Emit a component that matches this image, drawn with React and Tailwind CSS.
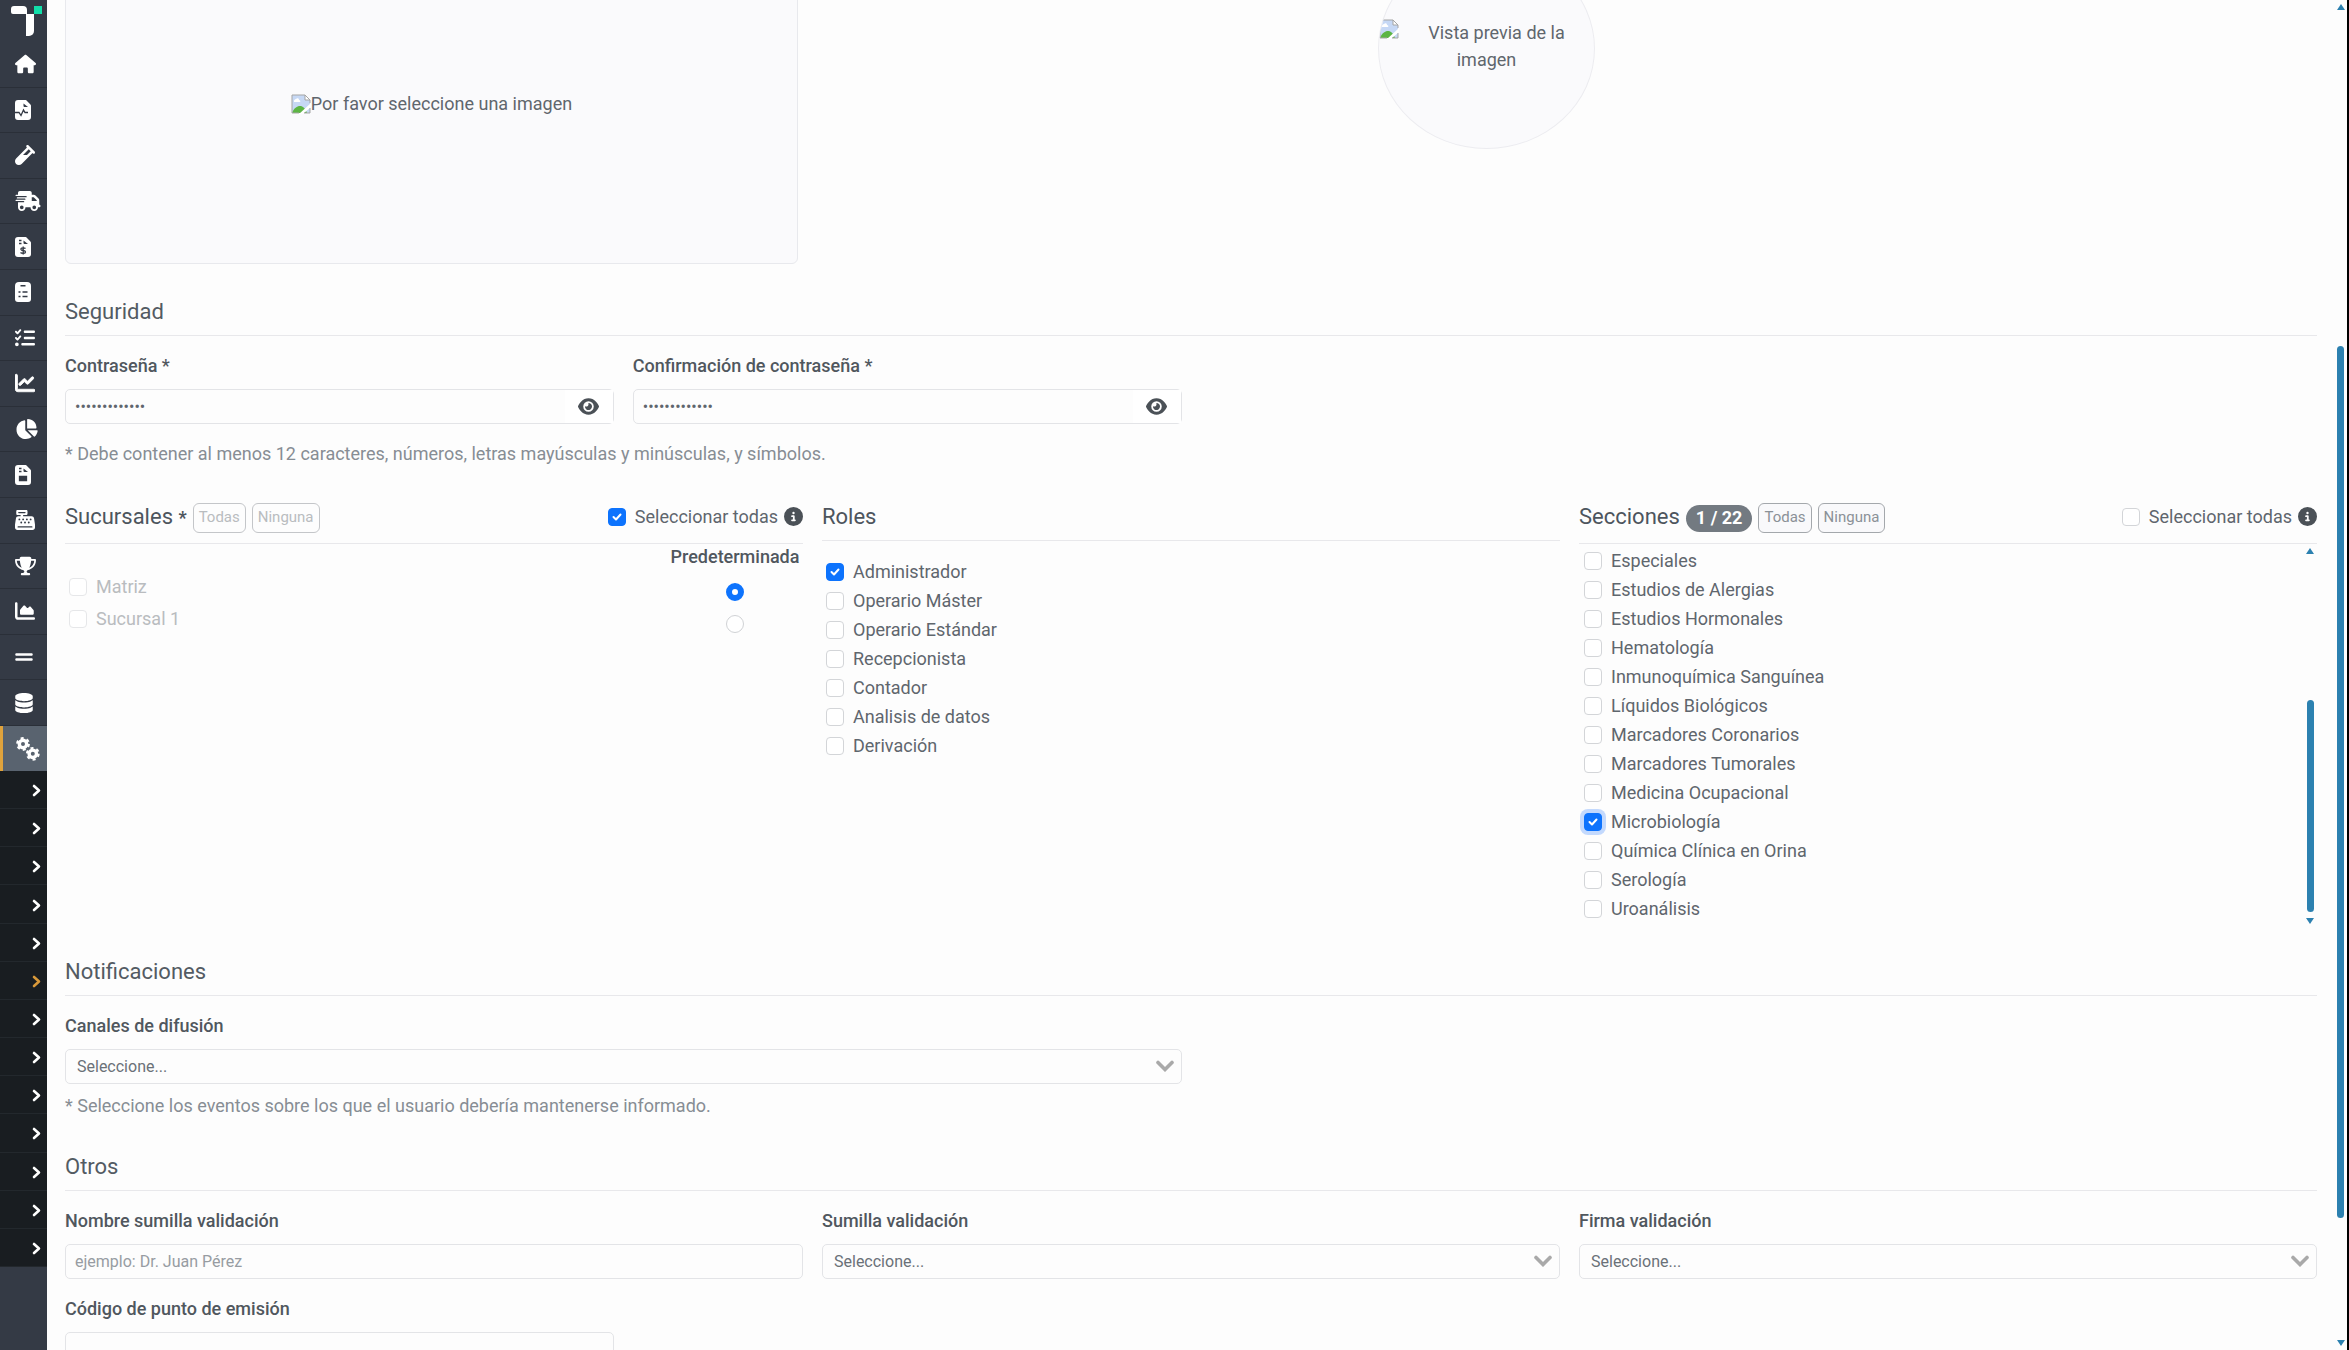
import React, { useState } from 'react';
import {
    FaHouse, FaVial, FaTruckFast, FaListCheck, FaChartLine, FaChartPie, FaCashRegister,
    FaTrophy, FaChartArea, FaGripLines, FaDatabase, FaCircleInfo, FaEye,
} from 'react-icons/fa6';

function FileShape({ children }) {
    return (
        <svg viewBox="0 0 16 20" className="h-5 w-4">
            <path d="M3 0h7c1 0 1.500 0 2 1l3 3c1 1 1 1.500 1 2v11a3 3 0 01-3 3H3a3 3 0 01-3-3V3a3 3 0 013-3z" fill="#fff" />
            <path d="M8.500 3.500L13 7H9.500a1 1 0 01-1-1z" fill="#343a45" />
            <g stroke="#343a45" strokeWidth="1.300" fill="none">{children}</g>
        </svg>
    );
}

const FileWave = () => (
    <FileShape><path d="M0 12.500h4l2 3 2.500-5.500 1.500 2.500h3" /></FileShape>
);

const FileDollar = () => (
    <FileShape><path d="M4 3.500h2.500M4 6.500h2.500M10.500 11.500c-1-1-5-1-4.500 1 .5 1.500 4.500.5 4.500 2.500 0 1.800-4 1.500-5 .5M8.200 9.500v8" /></FileShape>
);

const FileInvoice = () => (
    <FileShape>
        <path d="M4 3.500h2.500M4 6.500h2.500" />
        <path d="M4.500 11.500h7v4h-7z" fill="#343a45" />
    </FileShape>
);

const Clipboard = () => (
    <svg viewBox="0 0 16 20" className="h-5 w-4">
        <path d="M4 0h8a4 4 0 014 4v13a3 3 0 01-3 3H3a3 3 0 01-3-3V4a4 4 0 014-4z" fill="#fff" />
        <path d="M5.500 3.700h5M3.500 10h2M7.500 10h5M3.500 14.500h2M7.500 14.500h5" stroke="#343a45" strokeWidth="1.400" />
    </svg>
);

const Gears = () => (
    <svg viewBox="0 0 24 24" className="h-6 w-6" fill="none" stroke="#fff">
        <circle cx="7" cy="7" r="3.700" strokeWidth="3.400" />
        <circle cx="7" cy="7" r="5.800" strokeWidth="2.200" strokeDasharray="3 3.070" />
        <circle cx="16.800" cy="16.800" r="3.700" strokeWidth="3.400" />
        <circle cx="16.800" cy="16.800" r="5.800" strokeWidth="2.200" strokeDasharray="3 3.070" />
    </svg>
);

const menu = [
    { title: 'Inicio', icon: <FaHouse className="h-5 w-[21px]" /> },
    { title: 'Resultados', icon: <FileWave /> },
    { title: 'Muestras', icon: <FaVial className="h-5 w-5" /> },
    { title: 'Envíos', icon: <FaTruckFast className="h-5 w-[26px]" /> },
    { title: 'Facturas', icon: <FileDollar /> },
    { title: 'Órdenes', icon: <Clipboard /> },
    { title: 'Tareas', icon: <FaListCheck className="h-5 w-5" /> },
    { title: 'Estadísticas', icon: <FaChartLine className="h-5 w-5" strokeWidth="20" stroke="currentColor" /> },
    { title: 'Reportes', icon: <FaChartPie className="h-5 w-[23px]" /> },
    { title: 'Proformas', icon: <FileInvoice /> },
    { title: 'Caja', icon: <FaCashRegister className="h-5 w-5" /> },
    { title: 'Metas', icon: <FaTrophy className="h-5 w-[21px]" /> },
    { title: 'Control', icon: <FaChartArea className="h-5 w-5" /> },
    { title: 'Listas', icon: <FaGripLines className="h-5 w-[18px]" /> },
    { title: 'Datos', icon: <FaDatabase className="h-5 w-[18px]" /> },
];

const roles = ['Administrador', 'Operario Máster', 'Operario Estándar', 'Recepcionista', 'Contador', 'Analisis de datos', 'Derivación'];

const secciones = [
    'Especiales', 'Estudios de Alergias', 'Estudios Hormonales', 'Hematología', 'Inmunoquímica Sanguínea',
    'Líquidos Biológicos', 'Marcadores Coronarios', 'Marcadores Tumorales', 'Medicina Ocupacional',
    'Microbiología', 'Química Clínica en Orina', 'Serología', 'Uroanálisis',
];

function Logo() {
    return (
        <svg viewBox="0 0 32 30" className="h-[30px] w-8">
            <path d="M0 3a3 3 0 013-3h9a4 4 0 014 4v4H2a2 2 0 01-2-2z" fill="#fff" />
            <path d="M15 8h8v17a5 5 0 01-5 5h-3z" fill="#fff" />
            <path d="M23 0h8v8h-8z" fill="#12dfa9" />
        </svg>
    );
}

function BrokenImage() {
    return (
        <svg viewBox="0 0 20 20" className="h-5 w-5 shrink-0">
            <path d="M1 1h13l5 5v13H1z" fill="#c6d8f5" />
            <path d="M3 7c0-1 1-2 2-2 1-1 3-1 3 1 1 0 2 1 1 2H3z" fill="#fff" />
            <path d="M1 19c2-5 5-7 8-7s5 2 7 7z" fill="#5cb544" />
            <path d="M8 20L20 9v4l-8 7z" fill="#fff" />
            <path d="M19 9V6l-5-5H1v18h7M13 19h6v-5" fill="none" stroke="#a5a5a5" />
            <path d="M14 1v5h5z" fill="#fff" stroke="#a5a5a5" />
        </svg>
    );
}

function Sidebar() {
    return (
        <aside className="flex w-[47px] shrink-0 flex-col bg-[#343a45]">
            <a href="#inicio" title="Inicio" className="flex h-[42px] shrink-0 items-start pt-[6px] pl-[11px]"><Logo /></a>
            <nav className="flex flex-col">
                <div className="flex h-[684px] flex-col">
                    {menu.map(({ title, icon }) => (
                        <a key={title} href="#menu" title={title} className="flex flex-1 items-center border-b border-[#2a2f38] pl-[15px] text-white">
                            {icon}
                        </a>
                    ))}
                </div>
                <a href="#config" title="Configuración" className="flex h-[45px] items-center border-l-[3px] border-[#e0a33c] bg-[#59636f] pl-[13px] text-white">
                    <Gears />
                </a>
                <div className="flex h-[496px] flex-col bg-[#191d21]">
                    {Array.from({ length: 13 }, (_, i) => (
                        <a
                            key={i}
                            href="#submenu"
                            title={'Opción ' + (i + 1)}
                            className={'flex flex-1 items-center justify-end border-b border-[#23282d] pt-[2px] pr-[6px] ' + (i === 5 ? 'text-[#d9993a]' : 'text-white')}
                        >
                            <svg viewBox="0 0 9 13" className="h-[13px] w-[9px]">
                                <path d="M2 2l5 4.500L2 11" fill="none" stroke="currentColor" strokeWidth="2.600" strokeLinecap="round" strokeLinejoin="round" />
                            </svg>
                        </a>
                    ))}
                </div>
            </nav>
        </aside>
    );
}

function Check({ label, checked = false, focused = false, disabled = false }) {
    const [on, setOn] = useState(checked);

    return (
        <label className={'flex h-[29px] items-center gap-[9px] ' + (disabled ? 'text-[#b9bcbf]' : '')}>
            <span className="grid h-[18px] w-[18px] shrink-0">
                <input
                    type="checkbox"
                    checked={on}
                    disabled={disabled}
                    onChange={e => setOn(e.target.checked)}
                    className={'col-start-1 row-start-1 h-[18px] w-[18px] appearance-none rounded-[4px] border border-[#d3d5d8] bg-white checked:border-[#0d73fd] checked:bg-[#0d73fd] disabled:border-[#e6e7e9] ' + (focused ? 'ring-4 ring-[#c3d9fd]' : '')}
                />
                {on && (
                    <svg viewBox="0 0 18 18" className="pointer-events-none col-start-1 row-start-1 h-[18px] w-[18px]">
                        <path d="M5.500 9l2.500 2.500 4.500-5" fill="none" stroke="#fff" strokeWidth="2" strokeLinecap="round" strokeLinejoin="round" />
                    </svg>
                )}
            </span>
            {label}
        </label>
    );
}

function SelectAll({ checked }) {
    return (
        <div className="flex items-center gap-[6px]">
            <Check label="Seleccionar todas" checked={checked} />
            <FaCircleInfo className="mb-[2px] h-[19px] w-[19px] text-[#4b5157]" />
        </div>
    );
}

function SectionTitle({ children }) {
    return <h2 className="mt-6 flex h-12 items-center border-b border-[#e8e8eb] pt-[2px] text-[22px] text-[#535b63]">{children}</h2>;
}

function Label({ htmlFor, children }) {
    return <label htmlFor={htmlFor} className="mb-[10px] block leading-[27px] font-medium text-[#50575e]">{children}</label>;
}

function Password({ id, label }) {
    const [visible, setVisible] = useState(false);

    return (
        <div>
            <Label htmlFor={id}>{label}</Label>
            <div className="flex h-[35px] items-center rounded-[5px] border border-[#e3e4e7]">
                <input id={id} type={visible ? 'text' : 'password'} defaultValue="Laboratorio1*" className="h-full min-w-0 flex-1 px-[9px] text-base outline-none" />
                <button type="button" title="Mostrar" onClick={() => setVisible(!visible)} className="flex h-full w-12 items-center justify-center bg-white text-[#4b5157]">
                    <FaEye className="h-[19px] w-[21px]" />
                </button>
            </div>
        </div>
    );
}

function Select({ id, label }) {
    return (
        <div>
            <Label htmlFor={id}>{label}</Label>
            <div className="relative">
                <select id={id} className="h-[35px] w-full appearance-none rounded-[5px] border border-[#e3e4e7] px-[11px] text-base text-[#6a7178]">
                    <option>Seleccione...</option>
                </select>
                <svg viewBox="0 0 18 12" className="pointer-events-none absolute top-[11px] right-2 h-3 w-[18px]">
                    <path d="M2 2.500l7 7 7-7" fill="none" stroke="#a9a9a9" strokeWidth="3.600" strokeLinecap="round" />
                </svg>
            </div>
        </div>
    );
}

function SmallButton({ children, disabled }) {
    return (
        <button
            type="button"
            disabled={disabled}
            className="mt-[2px] h-[30px] rounded-[6px] border border-[#a4a8ac] bg-[#f9f9fb] px-[5px] text-[15px] text-[#8b9197] disabled:border-[#c4c6c9] disabled:bg-transparent disabled:text-[#b9bcbf]"
        >
            {children}
        </button>
    );
}

function Arrow({ down }) {
    return (
        <svg viewBox="0 0 8 6" className="h-[6px] w-2 shrink-0">
            <path d={down ? 'M0 0h8L4 6z' : 'M0 6h8L4 0z'} fill="#2c81b0" />
        </svg>
    );
}

export default function App() {
    return (
        <div className="flex h-screen overflow-hidden bg-[#fdfdfd] font-[Roboto,sans-serif] text-lg text-[#5f666d]">
            <Sidebar />

            <main className="min-w-0 flex-1 overflow-hidden pr-[17px] pl-[18px]">
                {/* Imágenes */}
                <div className="-mt-14 grid grid-cols-3 gap-x-[19px]">
                    <div className="mr-[5px] flex h-80 items-center justify-center rounded-[6px] border border-[#e8e9ed] bg-[#fafafc]">
                        <BrokenImage />
                        <span>Por favor seleccione una imagen</span>
                    </div>
                    <div className="col-span-2 flex justify-center pr-[166px]">
                        <div className="mt-1 flex h-[201px] w-[217px] overflow-hidden rounded-[50%] border border-[#ececf0] bg-[#fafafc] pt-[70px]">
                            <BrokenImage />
                            <p className="mr-5 flex-1 text-center leading-[27px]">
                                <span className="pl-5">Vista previa de la</span> imagen
                            </p>
                        </div>
                    </div>
                </div>

                <section>
                    <SectionTitle>Seguridad</SectionTitle>
                    <div className="mt-4 grid grid-cols-4 gap-x-[19px]">
                        <Password id="clave" label="Contraseña *" />
                        <Password id="clave2" label="Confirmación de contraseña *" />
                    </div>
                    <p className="mt-4 leading-[27px] text-[#878d94]">* Debe contener al menos 12 caracteres, números, letras mayúsculas y minúsculas, y símbolos.</p>
                </section>

                <div className="mt-6 grid grid-cols-3 gap-x-[19px]">
                    <section>
                        <div className="flex h-[53px] items-center justify-between border-b border-[#e8e8eb]">
                            <div className="flex items-center gap-[6px]">
                                <h2 className="text-[22px] text-[#4d555d]">Sucursales <b className="text-lg">*</b></h2>
                                <SmallButton disabled>Todas</SmallButton>
                                <SmallButton disabled>Ninguna</SmallButton>
                            </div>
                            <SelectAll checked />
                        </div>
                        <div className="flex justify-between pl-1">
                            <div className="flex flex-col gap-[3px] pt-7">
                                <Check label="Matriz" disabled />
                                <Check label="Sucursal 1" disabled />
                            </div>
                            <fieldset className="flex w-[136px] flex-col items-center gap-[14px]">
                                <legend className="w-full pb-[14px] text-center leading-[25px] font-medium text-[#50575e]">Predeterminada</legend>
                                <input type="radio" name="predeterminada" aria-label="Matriz" defaultChecked className="h-[18px] w-[18px] appearance-none rounded-full border border-[#d0d2d5] bg-white checked:border-[6px] checked:border-[#0d73fd]" />
                                <input type="radio" name="predeterminada" aria-label="Sucursal 1" className="h-[18px] w-[18px] appearance-none rounded-full border border-[#d0d2d5] bg-white checked:border-[6px] checked:border-[#0d73fd]" />
                            </fieldset>
                        </div>
                    </section>

                    <section>
                        <h2 className="flex h-[50px] items-center border-b border-[#e8e8eb] pt-[3px] text-[22px] text-[#4d555d]">Roles</h2>
                        <div className="pt-4 pl-1">
                            {roles.map(rol => <Check key={rol} label={rol} checked={rol === 'Administrador'} />)}
                        </div>
                    </section>

                    <section>
                        <div className="flex h-[53px] items-center justify-between border-b border-[#e8e8eb]">
                            <div className="flex items-center gap-[6px]">
                                <h2 className="text-[22px] text-[#4d555d]">Secciones</h2>
                                <span className="mt-[2px] flex h-[27px] items-center rounded-full bg-[#737a81] px-[10px] font-bold text-white">1 / 22</span>
                                <SmallButton>Todas</SmallButton>
                                <SmallButton>Ninguna</SmallButton>
                            </div>
                            <SelectAll />
                        </div>
                        <div className="flex h-[380px] justify-between overflow-hidden pl-1">
                            <div className="flex-1 pt-[2px] pl-px">
                                {secciones.map(s => <Check key={s} label={s} checked={s === 'Microbiología'} focused={s === 'Microbiología'} />)}
                            </div>
                            <div className="mr-[3px] flex flex-col items-center pt-1">
                                <Arrow />
                                <div className="mt-[146px] mb-[6px] w-[7px] flex-1 rounded-full bg-[#2c81b0]" />
                                <Arrow down />
                            </div>
                        </div>
                    </section>
                </div>

                <section>
                    <SectionTitle>Notificaciones</SectionTitle>
                    <div className="mt-4 grid grid-cols-2 gap-x-[19px]">
                        <Select id="canales" label="Canales de difusión" />
                    </div>
                    <p className="mt-2 leading-[27px] text-[#878d94]">* Seleccione los eventos sobre los que el usuario debería mantenerse informado.</p>
                </section>

                <section>
                    <SectionTitle>Otros</SectionTitle>
                    <div className="mt-4 grid grid-cols-3 gap-x-[19px]">
                        <div>
                            <Label htmlFor="nombre">Nombre sumilla validación</Label>
                            <input id="nombre" type="text" placeholder="ejemplo: Dr. Juan Pérez" className="h-[35px] w-full rounded-[5px] border border-[#e3e4e7] px-[9px] text-base placeholder:text-[#979ca2]" />
                        </div>
                        <Select id="sumilla" label="Sumilla validación" />
                        <Select id="firma" label="Firma validación" />
                    </div>
                    <div className="mt-4 grid grid-cols-4 gap-x-[19px]">
                        <div>
                            <Label htmlFor="codigo">Código de punto de emisión</Label>
                            <input id="codigo" type="text" className="h-[35px] w-full rounded-[5px] border border-[#e3e4e7] px-[9px] text-base" />
                        </div>
                    </div>
                </section>
            </main>

            {/* Barra de desplazamiento de la página */}
            <div className="flex w-[15px] shrink-0 flex-col items-center border-r-2 border-black py-1">
                <Arrow />
                <div className="mt-[336px] mb-[122px] w-[7px] flex-1 rounded-full bg-[#2c81b0]" />
                <Arrow down />
            </div>
        </div>
    );
}
